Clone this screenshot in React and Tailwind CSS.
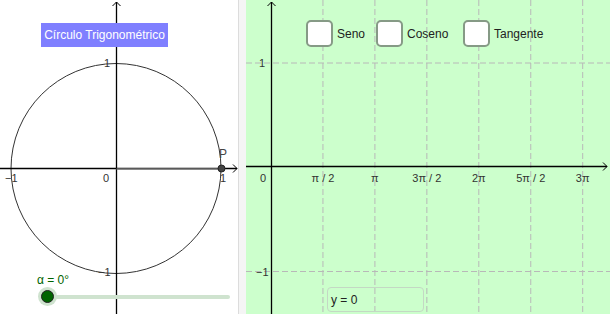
import React from "react";

const F = { fontFamily: '"Liberation Sans", Arial, sans-serif' };

function LeftGraph() {
  return (
    <svg width="238" height="314" className="absolute inset-0" style={F}>
      <circle cx="116" cy="168.5" r="105" fill="none" stroke="#333" strokeWidth="1" />
      <line x1="116.5" y1="2" x2="116.5" y2="314" stroke="#000" strokeWidth="1.3" />
      <polyline points="112.5,6 116.5,2 120.5,6" fill="none" stroke="#000" strokeWidth="1" />
      <line x1="0" y1="168.5" x2="237" y2="168.5" stroke="#000" strokeWidth="1.3" />
      <polyline points="233,164.5 237,168.5 233,172.5" fill="none" stroke="#000" strokeWidth="1" />
      <line x1="116.5" y1="169" x2="221" y2="169" stroke="#777" strokeWidth="1.5" />
      <text x="5" y="182" fontSize="11" fill="#333">−1</text>
      <text x="103" y="182" fontSize="11" fill="#333">0</text>
      <text x="220" y="182" fontSize="11" fill="#333">1</text>
      <text x="104" y="67" fontSize="11" fill="#333">1</text>
      <text x="98" y="276" fontSize="11" fill="#333">−1</text>
      <text x="219" y="158" fontSize="12" fill="#444">P</text>
      <circle cx="221.5" cy="168.5" r="3.5" fill="#444" stroke="#222" strokeWidth="1" />
    </svg>
  );
}

function RightGraph() {
  const ox = 25;
  const oy = 166.5;
  const step = 51.95;
  const xs = [1, 2, 3, 4, 5, 6].map((i) => ox + i * step);
  const labels = ["π / 2", "π", "3π / 2", "2π", "5π / 2", "3π"];
  return (
    <svg width="364" height="314" className="absolute inset-0" style={F}>
      {xs.map((x, i) => (
        <line key={i} x1={x} y1="0" x2={x} y2="314" stroke="#b8b8b8" strokeWidth="1" strokeDasharray="6 3" />
      ))}
      <line x1="0" y1="63" x2="364" y2="63" stroke="#b8b8b8" strokeWidth="1" strokeDasharray="6 3" />
      <line x1="0" y1="271.5" x2="364" y2="271.5" stroke="#b8b8b8" strokeWidth="1" strokeDasharray="6 3" />
      <line x1={ox + 0.5} y1="2" x2={ox + 0.5} y2="314" stroke="#000" strokeWidth="1.3" />
      <polyline points={`${ox - 3.5},6 ${ox + 0.5},2 ${ox + 4.5},6`} fill="none" stroke="#000" strokeWidth="1" />
      <line x1="0" y1={oy} x2="361" y2={oy} stroke="#000" strokeWidth="1.3" />
      <polyline points={`357,${oy - 4} 361,${oy} 357,${oy + 4}`} fill="none" stroke="#000" strokeWidth="1" />
      <text x="14" y="182" fontSize="11" fill="#333">0</text>
      {xs.map((x, i) => (
        <text key={i} x={x} y="182" fontSize="11" fill="#333" textAnchor="middle">{labels[i]}</text>
      ))}
      <text x="13" y="67" fontSize="11" fill="#333">1</text>
      <text x="10" y="275.5" fontSize="11" fill="#333">−1</text>
    </svg>
  );
}

function Check({ label, className }) {
  return (
    <div className={`absolute top-[20px] flex items-center gap-[4px] ${className}`}>
      <div className="w-[27px] h-[27px] rounded-[5px] border-2 border-[#869a86] bg-white" />
      <span className="text-[12px] text-[#222]">{label}</span>
    </div>
  );
}

export default function App() {
  return (
    <div className="w-[610px] h-[314px] flex overflow-hidden bg-white" style={F}>
      <div className="relative w-[238px] h-full bg-white">
        <LeftGraph />
        <div className="absolute left-[41px] top-[23px] w-[127px] h-[24px] bg-[#7f7fff] text-white text-[12px] flex items-center justify-center">
          Círculo Trigonométrico
        </div>
        <div className="absolute left-[37px] top-[273px] flex flex-col gap-[8px]">
          <span className="text-[12px] leading-[14px] text-[#006400]">α = 0°</span>
          <div className="relative ml-[10px] w-[183px] h-[4px] rounded-full bg-[#cfe3cf]">
            <div className="absolute -left-[9px] -top-[8px] w-[19px] h-[19px] rounded-full bg-[#cfe3cf] flex items-center justify-center">
              <div className="w-[13px] h-[13px] rounded-full bg-[#006400] border border-[#222]" />
            </div>
          </div>
        </div>
      </div>
      <div className="w-[8px] h-full border-l border-[#dcdcdc] bg-[#f5f5f5]" />
      <div className="relative flex-1 h-full bg-[#ccffcc]">
        <RightGraph />
        <Check label="Seno" className="left-[60px]" />
        <Check label="Coseno" className="left-[130px]" />
        <Check label="Tangente" className="left-[217px]" />
        <div className="absolute left-[81px] top-[287px] w-[97px] h-[25px] rounded-[4px] border border-[#c4d8c4] flex items-center pl-[3px] text-[12px] text-[#222]">
          y = 0
        </div>
      </div>
    </div>
  );
}
